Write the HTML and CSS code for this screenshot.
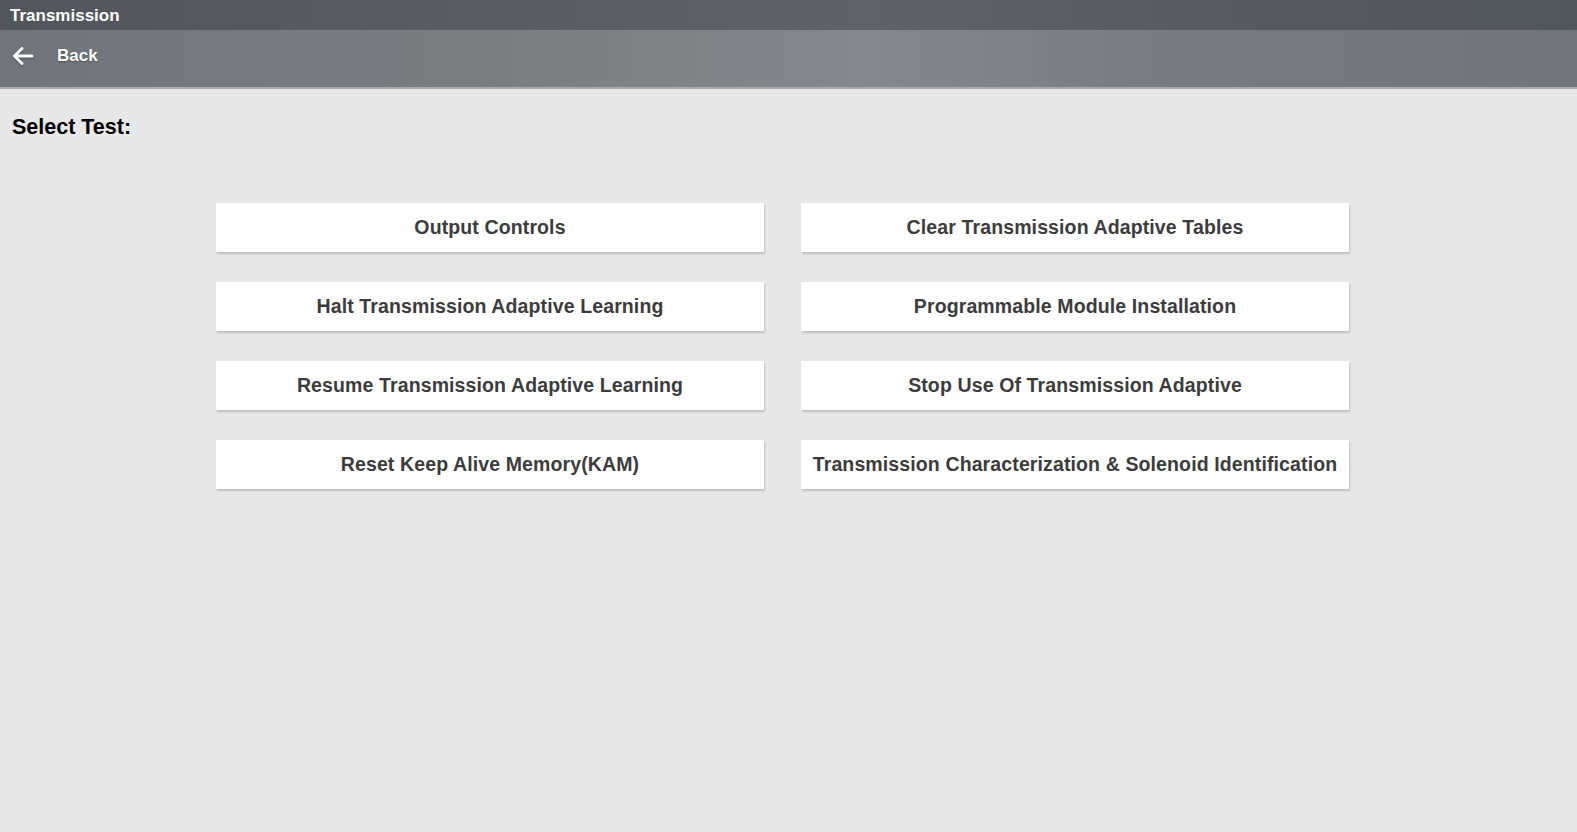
FILE: index.html
```html
<!DOCTYPE html>
<html lang="en">
<head>
  <meta charset="UTF-8">
  <title>Transmission</title>
  <link rel="stylesheet" href="styles.css">
</head>
<body>
<div class="header">
  <div class="title">Transmission</div>
  <div class="backbar">
    <a class="back" href="#">
      <svg class="arrow" width="22" height="20" viewBox="0 0 22 20">
        <path d="M20 10H3M10 2.5L2.5 10L10 17.5" fill="none" stroke="#fff" stroke-width="3" stroke-linecap="round" stroke-linejoin="round"/>
      </svg>
      <span>Back</span>
    </a>
  </div>
</div>

<div class="main">
  <h1 class="heading">Select Test:</h1>
  <div class="tests">
    <a class="test" href="#">Output Controls</a>
    <a class="test" href="#">Clear Transmission Adaptive Tables</a>
    <a class="test" href="#">Halt Transmission Adaptive Learning</a>
    <a class="test" href="#">Programmable Module Installation</a>
    <a class="test" href="#">Resume Transmission Adaptive Learning</a>
    <a class="test" href="#">Stop Use Of Transmission Adaptive</a>
    <a class="test" href="#">Reset Keep Alive Memory(KAM)</a>
    <a class="test" href="#">Transmission Characterization &amp; Solenoid Identification</a>
  </div>
</div>
</body>
</html>
```

FILE: styles.css
```css
* {
  margin: 0;
  padding: 0;
  box-sizing: border-box;
}

html, body {
  height: 100%;
}

body {
  background-color: #e8e8e8;
  font-family: "Liberation Sans", Arial, sans-serif;
  overflow: hidden;
}

a {
  text-decoration: none;
}

.header {
  background: linear-gradient(90deg, #71757b 0%, #7a7c80 30%, #84878b 55%, #777a80 75%, #71747a 100%);
  border-bottom: 2px solid #a9aaad;
}

.title {
  height: 30px;
  line-height: 31px;
  padding-left: 10px;
  background: linear-gradient(90deg, #52565c 0%, #5a5e64 35%, #5f6368 55%, #565a60 80%, #51565c 100%);
  color: #fff;
  font-size: 17px;
  font-weight: bold;
}

.backbar {
  height: 57px;
  display: flex;
  align-items: center;
  padding: 0 0 5px 12px;
}

.back {
  display: flex;
  align-items: center;
  color: #fff;
  font-size: 17px;
  font-weight: bold;
  text-shadow: 0 1px 2px rgba(0, 0, 0, 0.35);
}

.arrow {
  margin-right: 23px;
  filter: drop-shadow(0 1px 1px rgba(0, 0, 0, 0.35));
}

.main {
  padding: 26px 0 0 0;
}

.heading {
  padding-left: 12px;
  font-size: 21.5px;
  font-weight: bold;
  color: #000;
  line-height: 24px;
}

.tests {
  display: grid;
  grid-template-columns: 548px 548px;
  column-gap: 37px;
  row-gap: 30px;
  margin: 64px 0 0 216px;
}

.test {
  height: 49px;
  display: flex;
  align-items: center;
  justify-content: center;
  background-color: #fff;
  color: #3c3c3c;
  font-size: 19.5px;
  letter-spacing: 0.12px;
  font-weight: bold;
  box-shadow: 1px 2px 2px rgba(0, 0, 0, 0.18);
  white-space: nowrap;
}
```
